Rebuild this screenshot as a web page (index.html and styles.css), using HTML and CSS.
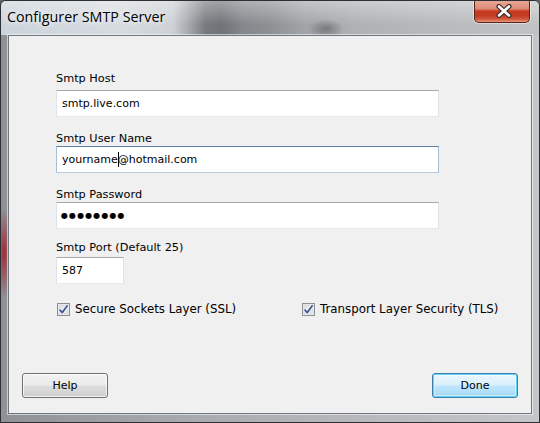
FILE: index.html
```html
<!DOCTYPE html>
<html lang="fr">
<head>
<meta charset="utf-8">
<title>Configurer SMTP Server</title>
<link rel="stylesheet" href="styles.css">
</head>
<body>
<div class="window">
  <div class="titlebar">
    <span class="title">Configurer SMTP Server</span>
    <button class="close-btn" aria-label="Fermer">
      <svg width="16" height="14" viewBox="0 0 16 14">
        <path d="M3 2.5 L13 11.5 M13 2.5 L3 11.5" stroke="#3a2b2b" stroke-width="5" stroke-linecap="round" fill="none"/>
        <path d="M3 2.5 L13 11.5 M13 2.5 L3 11.5" stroke="#ffffff" stroke-width="2.6" stroke-linecap="round" fill="none"/>
      </svg>
    </button>
  </div>
  <div class="frame">
    <div class="client">
      <div class="form">
        <div class="group g-host">
          <div class="label">Smtp Host</div>
          <div class="field">smtp.live.com</div>
        </div>
        <div class="group g-user">
          <div class="label">Smtp User Name</div>
          <div class="field field-focus">yourname<span class="caret"></span>@hotmail.com</div>
        </div>
        <div class="group g-pass">
          <div class="label">Smtp Password</div>
          <div class="field"><span class="dots">●●●●●●●●</span></div>
        </div>
        <div class="group g-port">
          <div class="label">Smtp Port (Default 25)</div>
          <div class="field field-port">587</div>
        </div>
      </div>
      <div class="checks">
        <label class="check check-ssl">
          <svg class="box" width="13" height="13" viewBox="0 0 13 13">
            <rect x="0.5" y="0.5" width="12" height="12" fill="#f4f4f4" stroke="#8e8f8f"/>
            <rect x="2" y="2" width="9" height="9" fill="#e4e6ea" stroke="#c3c6cc" stroke-width="0.6"/>
            <path d="M2.6 6.6 L5.2 9.6 L10.6 2.2" stroke="#ffffff" stroke-width="3.2" fill="none" stroke-linejoin="round"/>
            <path d="M2.6 6.6 L5.2 9.6 L10.6 2.2" stroke="#3e5891" stroke-width="1.8" fill="none" stroke-linejoin="round"/>
          </svg>
          <span>Secure Sockets Layer (SSL)</span>
        </label>
        <label class="check">
          <svg class="box" width="13" height="13" viewBox="0 0 13 13">
            <rect x="0.5" y="0.5" width="12" height="12" fill="#f4f4f4" stroke="#8e8f8f"/>
            <rect x="2" y="2" width="9" height="9" fill="#e4e6ea" stroke="#c3c6cc" stroke-width="0.6"/>
            <path d="M2.6 6.6 L5.2 9.6 L10.6 2.2" stroke="#ffffff" stroke-width="3.2" fill="none" stroke-linejoin="round"/>
            <path d="M2.6 6.6 L5.2 9.6 L10.6 2.2" stroke="#3e5891" stroke-width="1.8" fill="none" stroke-linejoin="round"/>
          </svg>
          <span>Transport Layer Security (TLS)</span>
        </label>
      </div>
      <div class="buttons">
        <button class="btn">Help</button>
        <button class="btn btn-default">Done</button>
      </div>
    </div>
  </div>
</div>
</body>
</html>
```

FILE: styles.css
```css
html, body {
  margin: 0;
  padding: 0;
}
body {
  width: 540px;
  height: 423px;
  overflow: hidden;
  background: #5f6367;
}
.window {
  box-sizing: border-box;
  width: 540px;
  height: 423px;
  border: 1px solid #2c3034;
  border-radius: 6px 6px 0 0;
  overflow: hidden;
  display: flex;
  flex-direction: column;
  background:
    radial-gradient(ellipse 9px 45px at 3px 252px, rgba(165, 25, 40, 0.85), rgba(165, 25, 40, 0) 100%),
    linear-gradient(to right, #8e9195 0%, #a5a8ab 30%, #b4b6b8 60%, #c4c6c8 100%);
}
.titlebar {
  height: 34px;
  flex: none;
  display: flex;
  align-items: flex-start;
  padding-left: 6px;
  padding-right: 9px;
  background:
    radial-gradient(ellipse 18px 10px at 325px 28px, rgba(60, 60, 60, 0.45), rgba(60, 60, 60, 0)),
    linear-gradient(to bottom, rgba(255, 255, 255, 0.35), rgba(255, 255, 255, 0) 70%),
    linear-gradient(to right, #ccd4dc 0%, #d6dbe0 22%, #cdd1d5 32%, #a3a7ab 35%, #777b7f 38%, #6f7377 41%, #84888c 45%, #8d9194 50%, #a1a4a7 56%, #afb1b3 66%, #b7b9bb 80%, #c0c2c4 100%);
}
.title {
  font-family: "Open Sans", "Noto Sans", sans-serif;
  font-size: 14.3px;
  line-height: 20px;
  color: #000;
  padding-top: 6px;
  text-shadow: 0 0 6px rgba(255, 255, 255, 0.9), 0 0 10px rgba(255, 255, 255, 0.7);
}
.close-btn {
  margin-left: auto;
  margin-top: -1px;
  width: 56px;
  height: 23px;
  padding: 0;
  border: 1px solid #5a2219;
  border-top: none;
  border-radius: 0 0 5px 5px;
  background: linear-gradient(to bottom, #e9a796 0%, #dc8d79 40%, #c63b22 50%, #c23a22 70%, #d35b41 88%, #e99a80 100%);
  box-shadow: 0 0 0 1px rgba(255, 255, 255, 0.45), inset 0 1px 0 rgba(255, 255, 255, 0.4);
  display: flex;
  align-items: center;
  justify-content: center;
}
.close-btn svg {
  display: block;
  margin-left: 3px;
}
.frame {
  flex: 1;
  padding: 0 7px 8px 7px;
  display: flex;
}
.client {
  box-sizing: border-box;
  width: 524px;
  height: 379px;
  border: 1px solid #6f767e;
  box-shadow: 0 0 0 1px rgba(255, 255, 255, 0.55);
  background: #f0f0f0;
  display: flex;
  flex-direction: column;
  padding: 36px 0 15px 0;
  font-family: "DejaVu Sans", Verdana, sans-serif;
  font-size: 11px;
  color: #000;
}
.form {
  padding-left: 47px;
}
.group + .group {
  margin-top: 15px;
}
.group.g-port {
  margin-top: 12px;
}
.label {
  line-height: 14px;
  height: 14px;
  font-size: 11.3px;
}
.g-host .label {
  margin-bottom: 4px;
}
.g-port .label {
  margin-bottom: 2px;
}
.field {
  box-sizing: border-box;
  width: 383px;
  height: 27px;
  background: #fff;
  border: 1px solid;
  border-color: #a7a9ae #dfe2e8 #e6e9ee #dfe2e8;
  padding: 0 4px 0 5px;
  display: flex;
  align-items: center;
  line-height: 14px;
  white-space: pre;
}
.field-focus {
  border-color: #5a7ea6 #a9bfd6 #b6cbe0 #a9bfd6;
}
.field-port {
  width: 68px;
}
.caret {
  display: inline-block;
  width: 1px;
  height: 15px;
  background: #000;
  margin-right: -1px;
}
.dots {
  font-size: 8px;
  letter-spacing: 1.1px;
  margin-left: -1px;
}
.checks {
  margin-top: 18px;
  padding-left: 48px;
  display: flex;
  align-items: center;
  height: 15px;
}
.check {
  display: flex;
  align-items: center;
  gap: 5px;
  line-height: 15px;
  font-size: 11.8px;
}
.check-ssl {
  width: 245px;
}
.box {
  display: block;
  flex: none;
}
.buttons {
  margin-top: auto;
  padding: 0 13px 0 13px;
  display: flex;
  justify-content: space-between;
}
.btn {
  box-sizing: border-box;
  width: 86px;
  height: 25px;
  padding: 0;
  font-family: "DejaVu Sans", Verdana, sans-serif;
  font-size: 11px;
  color: #000;
  border: 1px solid #707070;
  border-radius: 3px;
  background: linear-gradient(to bottom, #f2f2f2 0%, #ebebeb 48%, #dddddd 52%, #cfcfcf 100%);
  box-shadow: inset 0 0 0 1px rgba(255, 255, 255, 0.75);
}
.btn-default {
  border-color: #3c7fb1;
  background: linear-gradient(to bottom, #eaf6fd 0%, #d9f0fc 48%, #bee6fd 52%, #a7d9f5 100%);
  box-shadow: inset 0 0 0 1px #62d3f7, inset 0 0 0 2px rgba(255, 255, 255, 0.4);
}
```
